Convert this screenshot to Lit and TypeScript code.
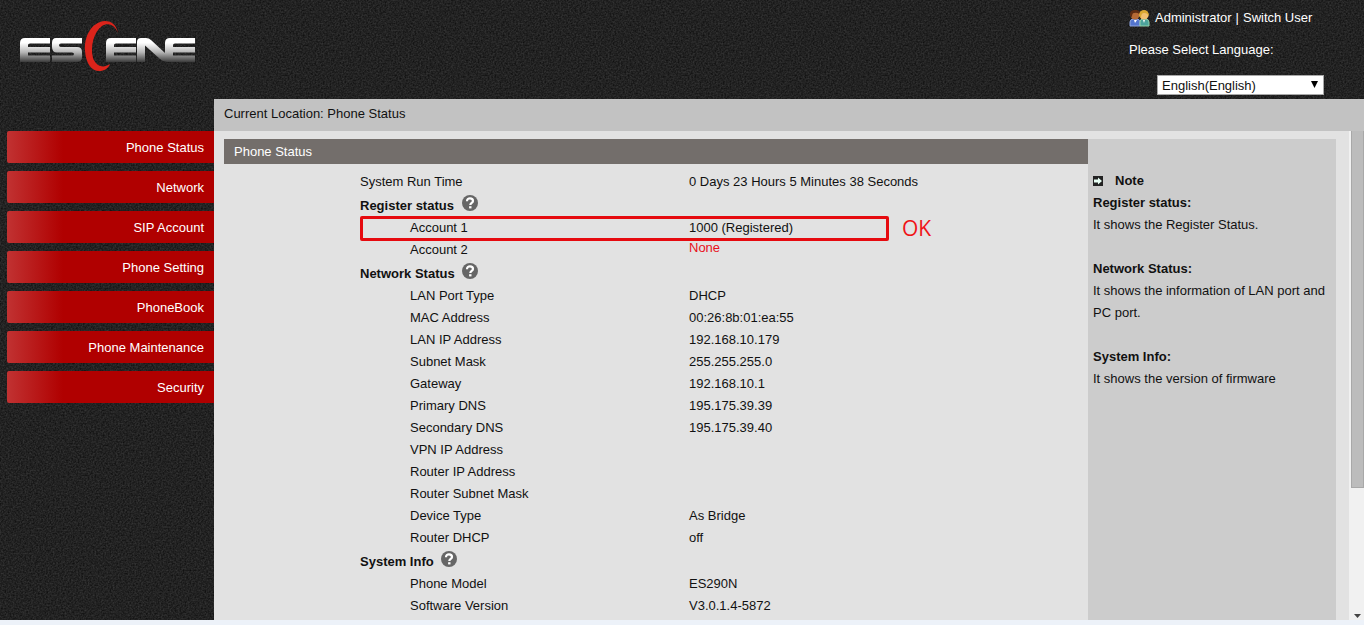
import { LitElement, html, css, svg, nothing } from "lit";
import { customElement, state } from "lit/decorators.js";

interface Row {
  label: string;
  value?: string;
  kind?: "top" | "section" | "item";
  tone?: "none";
  marked?: boolean;
}

const MENU = [
  "Phone Status",
  "Network",
  "SIP Account",
  "Phone Setting",
  "PhoneBook",
  "Phone Maintenance",
  "Security",
];

const ROWS: Row[] = [
  { label: "System Run Time", value: "0 Days 23 Hours 5 Minutes 38 Seconds", kind: "top" },
  { label: "Register status", kind: "section" },
  { label: "Account 1", value: "1000 (Registered)", marked: true },
  { label: "Account 2", value: "None", tone: "none" },
  { label: "Network Status", kind: "section" },
  { label: "LAN Port Type", value: "DHCP" },
  { label: "MAC Address", value: "00:26:8b:01:ea:55" },
  { label: "LAN IP Address", value: "192.168.10.179" },
  { label: "Subnet Mask", value: "255.255.255.0" },
  { label: "Gateway", value: "192.168.10.1" },
  { label: "Primary DNS", value: "195.175.39.39" },
  { label: "Secondary DNS", value: "195.175.39.40" },
  { label: "VPN IP Address", value: "" },
  { label: "Router IP Address", value: "" },
  { label: "Router Subnet Mask", value: "" },
  { label: "Device Type", value: "As Bridge" },
  { label: "Router DHCP", value: "off" },
  { label: "System Info", kind: "section" },
  { label: "Phone Model", value: "ES290N" },
  { label: "Software Version", value: "V3.0.1.4-5872" },
];

const NOTES = [
  { title: "Register status:", text: "It shows the Register Status." },
  { title: "Network Status:", text: "It shows the information of LAN port and PC port." },
  { title: "System Info:", text: "It shows the version of firmware" },
];

@customElement("app-root")
export class AppRoot extends LitElement {
  @state() private current = "Phone Status";

  static styles = css`
    :host {
      display: grid;
      grid-template-rows: auto minmax(0, 1fr) 5px;
      height: 100vh;
      overflow: hidden;
      font: 13px/22px "Liberation Sans", Arial, sans-serif;
      color: #111;
      background-color: #222;
      background-image: url("data:image/svg+xml,%3Csvg xmlns='http://www.w3.org/2000/svg' width='200' height='200'%3E%3Cfilter id='n' x='0' y='0' width='100%25' height='100%25' color-interpolation-filters='sRGB'%3E%3CfeTurbulence type='fractalNoise' baseFrequency='.6' numOctaves='2' stitchTiles='stitch'/%3E%3CfeColorMatrix values='.2 0 0 0 .035 .2 0 0 0 .035 .2 0 0 0 .035 0 0 0 0 1'/%3E%3C/filter%3E%3Crect width='200' height='200' filter='url(%23n)'/%3E%3C/svg%3E");
    }
    * { box-sizing: border-box; }
    .head {
      display: flex;
      justify-content: space-between;
      height: 99px;
      color: #fff;
    }
    .logo { display: block; margin: 18px 0 0 18px; }
    .tools { width: 235px; padding-top: 7px; }
    .user { display: flex; align-items: center; }
    .user svg { margin-right: 5px; }
    .user a { color: inherit; text-decoration: none; }
    .sep { margin: 0 4px; }
    .lang { display: block; margin-top: 10px; }
    .pick { position: relative; display: block; width: 167px; margin: 14px 0 0 28px; }
    select {
      appearance: none;
      display: block;
      width: 100%;
      height: 20px;
      padding: 1px 4px 0;
      border: 1px solid #a9a9a9;
      border-radius: 0;
      background: #fff;
      color: #111;
      font: inherit;
      line-height: 18px;
    }
    .caret { position: absolute; right: 6px; top: 6px; pointer-events: none; }
    .body { display: grid; grid-template-columns: 214px minmax(0, 1fr); min-height: 0; }
    .menu { display: flex; flex-direction: column; gap: 8px; padding: 32px 0 0 7px; }
    .menu a {
      height: 32px;
      padding-right: 10px;
      border-radius: 2px 0 0 2px;
      background: linear-gradient(90deg, #c13232, #b00000 56px);
      color: #fff;
      line-height: 34px;
      text-align: right;
      text-decoration: none;
    }
    .main { display: grid; grid-template-rows: 32px minmax(0, 1fr); min-height: 0; background: #e2e2e2; }
    .crumb { padding-left: 10px; background: #c2c2c2; line-height: 30px; }
    .view { display: grid; grid-template-columns: minmax(0, 1fr) 248px 13px 15px; min-height: 0; overflow: hidden; }
    .status { padding: 8px 0 0 10px; min-height: 0; }
    h1 {
      margin: 0;
      padding-left: 10px;
      background: #736e6b;
      color: #fff;
      font: inherit;
      line-height: 25px;
    }
    table { width: 100%; margin-top: 7px; border-collapse: collapse; table-layout: fixed; }
    th, td { height: 22px; padding: 0; text-align: left; font-weight: normal; white-space: nowrap; }
    th { padding-left: 186px; }
    .label-col { width: 465px; }
    .top th, .section th { padding-left: 136px; }
    .section th { height: 24px; padding-top: 2px; font-weight: bold; }
    .section svg { margin-left: 4px; vertical-align: -1px; }
    .none { color: #e8101c; line-height: 18px; vertical-align: top; }
    .marked { position: relative; }
    .mark {
      position: absolute;
      left: 136px;
      top: -1px;
      width: 529px;
      height: 25px;
      border: 3px solid #e60a0f;
      border-radius: 2px;
      pointer-events: none;
    }
    .ok {
      position: absolute;
      left: 678px;
      top: -1px;
      color: #f01418;
      font: 21px/24px "Open Sans", sans-serif;
    }
    .notes { margin-top: 8px; padding: 31px 8px 0 5px; background: #ccc; }
    .notes h2, .notes h3, .notes p { margin: 0; font-size: 13px; line-height: 22px; }
    .notes h2 { display: flex; align-items: center; gap: 12px; }
    .notes p { margin-bottom: 22px; }
    .bar { display: flex; grid-column: 4; flex-direction: column; justify-content: space-between; align-items: flex-end; background: #f1f1f1; }
    .thumb { width: 13px; height: 73%; border: 1px solid #a8a8a8; border-top: 0; background: #bcbcbc; }
    .bar svg { margin: 0 3px 2px 0; }
    .foot { background: #edf2f9; }
  `;

  private help() {
    return html`<svg width="16" height="16" viewBox="0 0 16 16" role="img" aria-label="Help">
      <circle cx="8" cy="8" r="8" fill="#666" />
      <path d="M5 6.300C5 4.200 6.300 3.300 8 3.300s3 1 3 2.600c0 2-2.700 2.100-2.700 4.200" fill="none" stroke="#fff" stroke-width="2.200" />
      <rect x="7.100" y="11.200" width="2.400" height="2.200" fill="#fff" />
    </svg>`;
  }

  private logo() {
    const e = (x: number) => svg`<path d="M${x + 5} 0H${x + 30}V5.500H${x + 10}Q${x + 8} 5.500 ${x + 8} 7V9H${x + 30}V14.500H${x + 8}V17.500H${x + 30}V24H${x}V5Q${x} 0 ${x + 5} 0Z" />`;
    return html`<svg class="logo" width="180" height="56" viewBox="0 0 180 56" role="img" aria-label="ESCENE">
      <defs>
        <linearGradient id="m" gradientUnits="userSpaceOnUse" x1="0" y1="0" x2="0" y2="24">
          <stop offset="0.200" stop-color="#fff" /><stop offset="0.600" stop-color="#b4b4b4" /><stop offset="1" stop-color="#3c3c3c" />
        </linearGradient>
      </defs>
      <g transform="translate(2 20)" fill="url(#m)">
        ${e(0)}
        <path d="M36 0H62V5.500H41Q39 5.500 39 7.200T41 9H57Q62 9 62 14V19Q62 24 57 24H32V17.500H52Q54 17.500 54 16T52 14.500H37Q32 14.500 32 9V5Q32 0 36 0Z" />
        ${e(86)}
        <path d="M117 4Q117 0 121 0H126Q129 0 131 2L145 15V5Q145 0 150 0H175V5.500H155Q153 5.500 153 7V9H175V14.500H153V17.500H175V24H147Q143 24 140 21L125 7.500V24H117Z" />
      </g>
      <path d="M100 15C98 6 93 3 87 3C73 4 66 19 67 33C68 46 74 54 83 53C88 52 91 49 92 46C85 51 78 48 75 40C72 28 76 14 84 8C90 4 97 7 100 15Z" fill="#dc241b" />
    </svg>`;
  }

  private row(r: Row) {
    const kind = r.kind ?? "item";
    if (kind === "section") {
      return html`<tr class="section"><th scope="rowgroup" colspan="2">${r.label} ${this.help()}</th></tr>`;
    }
    return html`<tr class="${kind} ${r.marked ? "marked" : ""}">
      <th scope="row">${r.label}</th>
      <td class=${r.tone ?? nothing}>${r.value}${r.marked ? html`<span class="mark"></span><span class="ok">OK</span>` : nothing}</td>
    </tr>`;
  }

  render() {
    return html`
      <header class="head">
        ${this.logo()}
        <div class="tools">
          <div class="user">
            <svg width="21" height="18" viewBox="0 0 21 18" aria-hidden="true">
              <path d="M1 17V13Q1 10 5 10H7Q11 10 11 13V17Z" fill="#5475cf" stroke="#8fa5e0" />
              <path d="M11 17V13Q11 10 14 10H16Q20 10 20 13V17Z" fill="#4da39c" stroke="#8fd0a8" />
              <circle cx="6" cy="6" r="4.500" fill="#b56a35" /><path d="M1 7Q0 1 6 1T11 6Q9 3 5 4Q3 4 3 8Z" fill="#5b2b12" />
              <circle cx="15" cy="6" r="4.500" fill="#f0c070" /><path d="M10 7Q10 1 15 1T20 8Q19 4 15 4Q12 4 12 9Z" fill="#d9a832" />
              <path d="M5 11L6 14L8 11M14 11L15 14L16 11" fill="#fff" />
            </svg>
            <a href="#admin">Administrator</a><span class="sep">|</span><a href="#switch">Switch User</a>
          </div>
          <label class="lang" for="lang">Please Select Language:</label>
          <div class="pick">
            <select id="lang"><option>English(English)</option></select>
            <svg class="caret" width="7" height="7" viewBox="0 0 7 7" aria-hidden="true"><path d="M0 0H7L3.500 7Z" fill="#000" /></svg>
          </div>
        </div>
      </header>
      <div class="body">
        <nav class="menu">
          ${MENU.map((m) => html`<a href="#" aria-current=${m === this.current ? "page" : nothing} @click=${() => (this.current = m)}>${m}</a>`)}
        </nav>
        <main class="main">
          <div class="crumb">Current Location: Phone Status</div>
          <div class="view">
            <section class="status">
              <h1>Phone Status</h1>
              <table><colgroup><col class="label-col"><col></colgroup><tbody>${ROWS.map((r) => this.row(r))}</tbody></table>
            </section>
            <aside class="notes">
              <h2>
                <svg width="10" height="10" viewBox="0 0 10 10" aria-hidden="true"><rect width="10" height="10" fill="#222" /><path d="M1 3.500H5V1.500L9 5L5 8.500V6.500H1Z" fill="#e8fff4" /></svg>
                Note
              </h2>
              ${NOTES.map((n) => html`<h3>${n.title}</h3><p>${n.text}</p>`)}
            </aside>
            <div class="bar" aria-hidden="true">
              <div class="thumb"></div>
              <svg width="7" height="4" viewBox="0 0 7 4"><path d="M0 0H7L3.500 4Z" fill="#444" /></svg>
            </div>
          </div>
        </main>
      </div>
      <footer class="foot"></footer>
    `;
  }
}
